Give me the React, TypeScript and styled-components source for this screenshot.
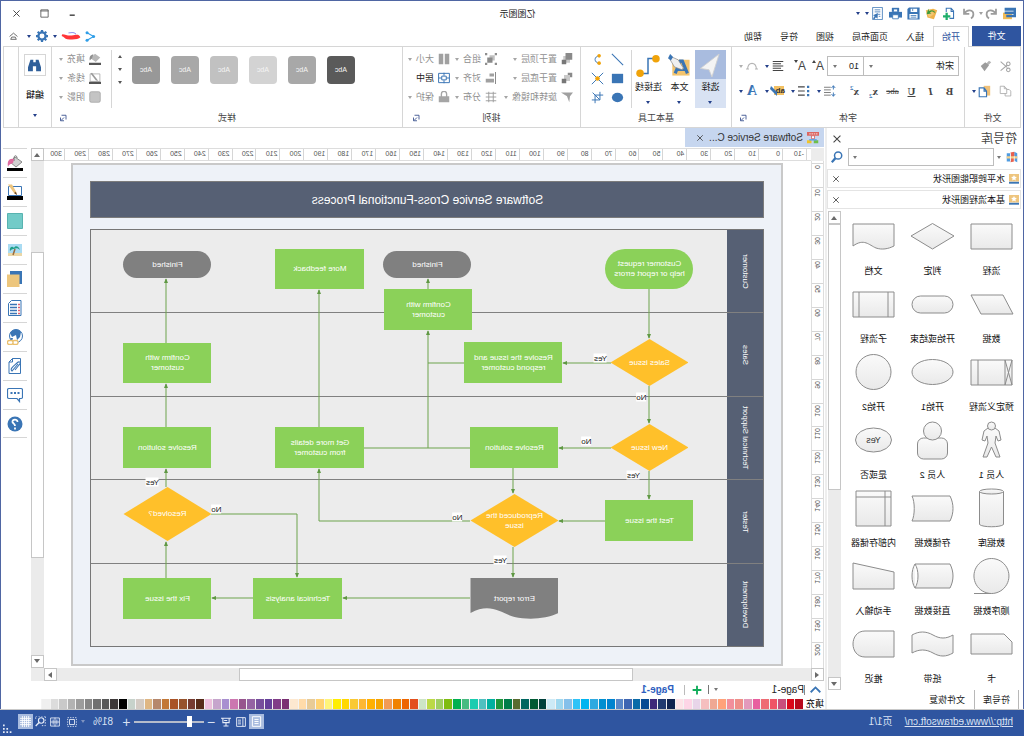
import React from "react";
import styled, { createGlobalStyle, css } from "styled-components";

const blue = "#2f55a0";
const iconBlue = "#3a75b5";
const line = "#d6d6d6";
const ink = "#222222";
const dim = "#8f8f8f";

const Global = createGlobalStyle`
  * { box-sizing: border-box; }
  html, body { margin: 0; padding: 0; background: #ffffff; }
  body { overflow-x: hidden; }
  button, input, select { font: inherit; color: inherit; margin: 0; }
  ul, h1, h2 { margin: 0; padding: 0; font: inherit; list-style: none; }
`;

/* The whole window is flipped left to right. */
const Window = styled.div`
  display: flex;
  flex-direction: column;
  min-height: 100vh;
  transform: scaleX(-1);
  background: #ffffff;
  color: ${ink};
  border: 1px solid #4f66a3;
  border-bottom: 0;
  font-family: "Liberation Sans", "Noto Sans CJK SC", sans-serif;
  font-size: 9px;
  line-height: 12px;
`;

const Row = styled.div<{ $gap?: number; $h?: number; $between?: boolean }>`
  display: flex;
  align-items: center;
  gap: ${(p) => p.$gap ?? 0}px;
  ${(p) => p.$h && css`height: ${p.$h}px;`}
  ${(p) => p.$between && css`justify-content: space-between;`}
`;

const Caret = styled.span<{ $c?: string; $up?: boolean; $big?: boolean }>`
  flex: none;
  width: 0;
  height: 0;
  border: ${(p) => (p.$big ? 3 : 2)}px solid transparent;
  border-bottom-width: ${(p) => (p.$up ? (p.$big ? 4 : 3) : 0)}px;
  border-top-width: ${(p) => (p.$up ? 0 : 3)}px;
  border-top-color: ${(p) => p.$c ?? "#24408a"};
  border-bottom-color: ${(p) => p.$c ?? "#24408a"};
`;

const Tool = styled.button<{ $w?: number; $top?: boolean }>`
  display: inline-flex;
  flex: none;
  align-items: center;
  justify-content: center;
  width: ${(p) => p.$w ?? 18}px;
  height: 18px;
  padding: 0;
  border: 0;
  background: none;
  ${(p) => p.$top && css`${Caret} { align-self: flex-start; margin-top: 3px; }`}
`;

/* ---------- icons ---------- */

const glyphs: Record<string, React.ReactNode> = {
  logo: <><path d="M5 7h11v8H5z" fill="#f2bb55" /><path d="M0 1h14v3.500H3v1h11v3H3v1h9v3H0z" fill={iconBlue} /></>,
  undo: <path d="M2.500 2v6.500H9M3 8C6 2.500 14 3 14 9c0 2-1 4-3 5" fill="none" stroke="#9c9c9c" strokeWidth="2.200" />,
  redo: <path d="M13.500 2v6.500H7M13 8C10 2.500 2 3 2 9c0 2 1 4 3 5" fill="none" stroke="#9c9c9c" strokeWidth="2.200" />,
  add: <><path d="M12 6V1.500H6L3 5v9h5M6 1.500v4H3" fill="none" stroke={iconBlue} strokeWidth="1.300" /><path d="M11.500 7v9M7 11.500h9" stroke="#1fae6b" strokeWidth="2.800" /></>,
  open: <><path d="M1 4l5-2 9 2-2 9-8 2z" fill="#efb24a" /><path d="M11 13l4-9-7-1-3 6z" fill="#f2c675" /><path d="M3 8c1-4 5-5 8-3l1-3 2 7-6-1 2-1C7 4 5 6 3 8z" fill="#3f9a3a" /></>,
  save: <><path d="M.500.500h13l2 2v13H.500z" fill={iconBlue} /><path d="M3.500 2h8v4h-8zM3 8.500h10V14H3z" fill="#fff" /><path d="M4.500 10.500h7M4.500 12.500h7M9 2v3" stroke={iconBlue} /></>,
  print: <><path d="M0 6h16v7H0z" fill={iconBlue} /><path d="M3.500 1h9v5h-9z" fill={iconBlue} /><path d="M5.500 2.500h5V6h-5zM4.500 9.500h7v5h-7z" fill="#fff" stroke={iconBlue} /></>,
  doc: <><path d="M2 .500h12v15H2z" fill="#fff" stroke={iconBlue} /><path d="M4.500 3.500h7M4.500 6h7M4.500 9h3M4.500 11.500h2" stroke={iconBlue} /><path d="M7.500 7.500l6 2.500-2 1 2 3-1.500 1.500-2-3-2 2z" fill={iconBlue} /></>,
  cut: <path d="M14 2L6 9M14 13L6 6.500M4.500 10a2.200 2.200 0 1 0 .1 0M4.500 2.500a2.200 2.200 0 1 0 .1 0" fill="none" stroke="#a5a5a5" strokeWidth="1.300" />,
  brush: <><path d="M1 3l3-2 5 5-3 2z" fill="#b5b5b5" /><path d="M4 7l5-4 6 5-5 7z" fill="#9c9c9c" /></>,
  copy: <path d="M6.500 10.500v-6l3-3h5v9zM9.500 1.500v3h-3M6.500 5.500h-3l-2 2v6h7v-3" fill="#fff" stroke="#a8a8a8" />,
  paste: <><path d="M1 1h8v12H1z" fill="#efc078" /><path d="M5.500 7.500l3-4h6v11h-9zM8.500 3.500v4h-3" fill="#fff" stroke={iconBlue} strokeWidth="1.400" /></>,
  align: <path d="M1 2h14M4 5h11M1 8h14M4 11h11M1 14h14" stroke="#444" strokeWidth="1.400" />,
  arc: <path d="M2 12C3 2 13 2 14 12M0 12h4M12 12h4" fill="none" stroke="#b5b5b5" strokeWidth="1.400" />,
  spacing: <><path d="M7 3h9M7 6.500h9M7 10h9M7 13.500h9" stroke="#555" /><path d="M3.500 1v5M3.500 10v5M1 4l2.500-3L6 4M1 12l2.500 3L6 12" stroke={iconBlue} fill="none" strokeWidth="1.200" /></>,
  bullets: <><path d="M7 2.500h9M7 8h9M7 13.500h9" stroke="#444" strokeWidth="1.400" /><path d="M1 1h3v3H1zM1 6.500h3v3H1zM1 12h3v3H1z" fill={iconBlue} /></>,
  line: <path d="M14 2L2 14" stroke={iconBlue} strokeWidth="1.200" />,
  rect: <path d="M2 3h12v10H2z" fill={iconBlue} />,
  circle: <ellipse cx="8" cy="8" rx="6" ry="5" fill={iconBlue} />,
  curve: <><path d="M5 3c8 1 8 9 0 10" fill="none" stroke={iconBlue} strokeWidth="1.200" /><circle cx="6" cy="3.500" r="2.200" fill="#f0a30a" /><circle cx="6" cy="12.500" r="2.200" fill="#f0a30a" /></>,
  cross: <><path d="M1 1l14 14M15 1L1 15" stroke={iconBlue} strokeWidth="1.200" /><circle cx="8" cy="8" r="2.800" fill="#f0a30a" /></>,
  crop: <path d="M5 1v10h10M1 5h10v10M5 11L14 2" fill="none" stroke={iconBlue} strokeWidth="1.200" />,
  front: <><path d="M5 1h10v10H5z" fill="#c9c9c9" /><path d="M8 0h7v8H8z" fill="#777" transform="translate(-8 0)" /><path d="M1 1h8v8H1z" fill="#777" /><path d="M7 7h8v8H7z" fill="#8a8a8a" stroke="#fff" /></>,
  back: <><path d="M1 1h6v6H1z" fill="#8a8a8a" /><path d="M4 4h8v8H4z" fill="#c9c9c9" /><path d="M9 9h6v6H9z" fill="#777" /></>,
  rotate: <path d="M0 2h16l-8 5-3 8-1-8z" fill="#a0a0a0" />,
  group: <><path d="M3 3h7v7H3z" fill="#c0c0c0" /><path d="M6 6h7v7H6z" fill="#8a8a8a" /><path d="M0 0h3v3H0zM13 0h3v3h-3zM0 13h3v3H0zM13 13h3v3h-3z" fill="#8f8f8f" /></>,
  alignObj: <><path d="M2 0v16" stroke="#888" strokeWidth="1.300" /><path d="M4 2h6v4H4zM4 9h11v5H4z" fill="#a0a0a0" /></>,
  distribute: <path d="M1 3h14M1 8h14M1 13h14M5 1v14M11 1v14" stroke="#9a9a9a" fill="none" strokeWidth="1.200" />,
  size: <path d="M1 1h6v14H1zM9 1h6v14H9z" fill="#a0a0a0" />,
  center: <><path d="M.800 1.800h14.400v12.400H.800z" fill="none" stroke={iconBlue} strokeWidth="1.300" /><path d="M5 5.500h6v5H5zM8 1v4M8 11v4M1 8h4M11 8h4" fill="#fff" stroke={iconBlue} strokeWidth="1.300" /></>,
  lock: <><path d="M1 7h14v8H1z" fill="#a5a5a5" /><path d="M4.500 8V4a3.500 3.500 0 0 1 7 0v4" fill="none" stroke="#a5a5a5" strokeWidth="1.800" /></>,
  fill: <><path d="M1 6l7-5 6 6-7 5z" fill="#b8b8b8" /><path d="M10 2c4 0 6 3 5 8l-3-3z" fill="#8f8f8f" /><path d="M0 13h16v3H0z" fill="#555" /></>,
  stroke: <><path d="M1.500 2.500h13v10h-13z" fill="#fff" stroke="#a5a5a5" /><path d="M12 1L5 10l-1 2 3-1 7-9z" fill="#9a9a9a" /><path d="M0 13h16v3H0z" fill="#555" /></>,
  shadow: <rect x="1" y="1" width="14" height="14" rx="2" fill="#c4c4c4" stroke="#a2a2a2" />,
  launch: <path d="M2 11V2.500H11M6 7l6 6M13 7v6.500H6" fill="none" stroke="#3c5390" strokeWidth="1.800" />,
  share: <><path d="M13 2.500L3.500 8l9.500 5.500" fill="none" stroke="#2f9ee8" strokeWidth="1.600" /><circle cx="3.500" cy="8" r="2.200" fill="#2f9ee8" /><circle cx="13" cy="2.500" r="2.200" fill="#2f9ee8" /><circle cx="13" cy="13.500" r="2.200" fill="#2f9ee8" /></>,
  gear: <><circle cx="8" cy="8" r="4.800" fill="none" stroke={iconBlue} strokeWidth="3" /><path d="M8 0v3M8 13v3M0 8h3M13 8h3M2.300 2.300l2 2M11.700 11.700l2 2M13.700 2.300l-2 2M4.300 11.700l-2 2" stroke={iconBlue} strokeWidth="3" /></>,
  collapse: <path d="M1 8l7-6 7 6M3 13h10l-2-4h-6z" fill="none" stroke="#555" strokeWidth="1.500" />,
  close: <path d="M2.500 2.500l11 11M13.500 2.500l-11 11" stroke="#444" strokeWidth="1.700" />,
  max: <path d="M1.500 1.500h13v13h-13zM1 3.500h14" fill="none" stroke="#555" strokeWidth="1.500" />,
  min: <path d="M4 11h9" stroke="#444" strokeWidth="2.600" />,
  binoculars: <path d="M3 1h3.500v3h3V1H13l3 9v5h-6V9H6v6H0v-5z" fill="#2f5f9a" />,
  search: <><circle cx="6.500" cy="6" r="4.800" fill="none" stroke={iconBlue} strokeWidth="2" transform="matrix(-1 0 0 1 16 0)" /><path d="M6 9.500l-5 5.500" stroke={iconBlue} strokeWidth="3" /></>,
  books: <><path d="M1 3l4-2v12l-4 2z" fill="#4f9be0" /><path d="M5 1l5 1v13l-5-1z" fill="#e8604e" /><path d="M10 3h5v11h-5z" fill="#4f9be0" /><path d="M1 7h14v3H1z" fill="#f5d08a" /><path d="M5 7v8M10 3v11" stroke="#fff" /></>,
  star: <><path d="M0 0h16v12H0z" fill="#eec57e" /><path d="M8 1.500l1.400 3 3.200.3-2.400 2.200.7 3.200L8 8.600 5.100 10.200l.7-3.200L3.400 4.800l3.200-.3z" fill="#fff" /><path d="M0 12.500h16v3H0z" fill={iconBlue} /></>,
  chart: <><path d="M0 0h16v5H0z" fill="#dc6662" /><path d="M2 2.500h12" stroke="#fff" strokeDasharray="2 1" /><path d="M6 5h4v4H6z" fill="#fff" stroke="#d9534f" /><path d="M1 11h6v4H1z" fill="#6fbf4b" /><path d="M10 11h6v4h-6z" fill="#f0c429" /><path d="M8 9v2M3 10.500h10" stroke="#4f9be0" strokeWidth="1.400" /></>,
  sideFill: <><path d="M1 7l7-5 5 5-6 5z" fill="#d0d0d0" stroke="#8a8a8a" /><path d="M6 3c0-3 3-3 3 0v3" fill="none" stroke="#777" /><path d="M9 4c5-1 7 2 6 8-1-3-3-3-5-4z" fill="#df6a9f" /><path d="M0 13h16v3H0z" fill="#000" /></>,
  sideLine: <><path d="M1.500 2.500h13v9h-13z" fill="#fff" stroke={iconBlue} /><path d="M15 .500h-4l-4 7-1 3.500 3-2z" fill="#ecc47d" /><path d="M6 11l1-3 2 1z" fill="#5a3a20" /><path d="M0 12h16v4H0z" fill="#000" /></>,
  teal: <path d="M.5.500h15v15H.5z" fill="#72cbc8" stroke="#58b3b0" />,
  image: <><path d="M1 2h14v12H1z" fill="#a9dbf2" /><path d="M1 11h14v3H1z" fill="#ead7a8" /><path d="M8 7l2 6" stroke="#9a6a3a" strokeWidth="1.500" /><path d="M3 8c1-4 5-5 6-2 2-3 5 0 4 3-2-2-3-2-4-2-2-1-4-1-6 1z" fill="#1fa08a" /></>,
  layers: <><path d="M1 0h12v13H1z" fill={iconBlue} /><path d="M3.500 3.500h12.500v12.500H3.500z" fill="#edc67d" /></>,
  list: <><path d="M14 .500H4.500l-3 3v12H14z" fill="#fff" stroke={iconBlue} transform="matrix(-1 0 0 1 16 0)" /><path d="M6 4.500h7M6 7.500h7M6 10.500h7M6 13.500h7" stroke={iconBlue} strokeWidth="1.500" /><path d="M3 4.500h2M3 7.500h2M3 10.500h2M3 13.500h2" stroke="#e06070" strokeWidth="1.500" /></>,
  globe: <><circle cx="7" cy="7" r="6.500" fill="#fff" stroke={iconBlue} /><path d="M2 3c3-4 9-3 11 1l-2 4-4-2-1 5-3-3zM10 9l3 0-2 3z" fill={iconBlue} /><rect x="5" y="11.500" width="5.500" height="4" rx="1.800" fill="#fff" stroke="#eabf6c" strokeWidth="1.300" /><rect x="10" y="11.500" width="5.500" height="4" rx="1.800" fill="#fff" stroke="#eabf6c" strokeWidth="1.300" /></>,
  attach: <><path d="M2.500 .500h8l3.500 3.500v11.500H2.500zM10.500.500v3.500h3.500" fill="#fff" stroke={iconBlue} /><path d="M12 6l-6 7c-3-2 3-6 5-8s5-1 2 2l-4 5" fill="none" stroke={iconBlue} strokeWidth="1.100" transform="matrix(-1 0 0 1 17 0)" /></>,
  chat: <><path d="M2 1.500h12c1 0 1.500.500 1.500 1.500v7c0 1-.5 1.500-1.500 1.500H6L3.500 14.500V11.500H2C1 11.500 .5 11 .5 10V3C.5 2 1 1.500 2 1.500z" fill="#fff" stroke={iconBlue} strokeWidth="1.200" /><path d="M3.500 6h2M7 6h2M10.500 6h2" stroke={iconBlue} strokeWidth="1.800" /></>,
  help: <><circle cx="8" cy="8" r="7.500" fill={iconBlue} /><path d="M5.500 6C5.500 2.500 11 3 10.500 6c-.3 1.500-2.500 1.500-2.500 4M8 11.500v2" fill="none" stroke="#fff" strokeWidth="1.800" /></>,
  chevron: <path d="M1 12l7-7 7 7" fill="none" stroke={iconBlue} strokeWidth="2.600" />,
  plus: <path d="M8 1v14M1 8h14" stroke="#12ad5b" strokeWidth="3" />,
  page: <path d="M2 1h12v14H2zM5 5h6M5 8h6M5 11h6" fill="none" stroke="#fff" strokeWidth="1.400" />,
  split: <path d="M1 1h14v14H1zM5 1v14M8 5h5M8 8h5M8 11h5" fill="none" stroke="#e6ecf7" strokeWidth="1.500" />,
  present: <path d="M0 2h16M3 2v7h10V2M8 9v5M4 14.500h8M6 5.500h5" fill="none" stroke="#e6ecf7" strokeWidth="1.700" />,
  select: <><path d="M1 1h14v14H1z" fill="none" stroke="#e6ecf7" strokeWidth="1.400" strokeDasharray="2 2" /><path d="M4 4h8v8H4z" fill="none" stroke="#e6ecf7" strokeWidth="1.400" /></>,
  fit: <path d="M1 1.500h14v13H1zM1 8h14M5 4v8M11 4v8M8 1v14" fill="none" stroke="#e6ecf7" strokeWidth="1.400" />,
  zoomArea: <><circle cx="7" cy="6.500" r="4" fill="none" stroke="#e6ecf7" strokeWidth="1.700" /><path d="M10 9.500l5 5" stroke="#e6ecf7" strokeWidth="2" /><path d="M1 0h14v5M1 1v13h6" fill="none" stroke="#e6ecf7" strokeWidth="1.300" strokeDasharray="2 2" /></>,
  grid: <path d="M0 3.500h16M0 6.500h16M0 9.500h16M0 12.500h16M3.500 0v16M6.500 0v16M9.500 0v16M12.500 0v16" stroke="#fff" strokeWidth="1.200" />,
  grip: <path d="M13 1h3v3h-3zM13 7h3v3h-3zM13 13h3v3h-3zM7 7h3v3H7zM7 13h3v3H7zM1 13h3v3H1z" fill="#e6ecf7" />,
  arrow: <path d="M2 0l13 10-6 1-2 5z" fill="#f4f4f4" stroke="#cfcfcf" strokeWidth=".6" />,
  textPen: <><path d="M1 4h12v11H1z" fill="#f3c46e" /><path d="M2.500 13.500l3.500-8.500h1.500l3.500 8.500" fill="none" stroke={iconBlue} strokeWidth="2.200" /><path d="M4 11h6" stroke={iconBlue} strokeWidth="1.600" /><path d="M13.500 2L9 4 5.500 9.500 6 11l5.500-2L14.500 4z" fill="#efefef" stroke="#8a8a8a" strokeWidth=".5" /><path d="M14.500 0L12.500 2l1.500 2.500L16 3z" fill={iconBlue} /></>,
  connector: <><path d="M13 13H8V3H3" fill="none" stroke={iconBlue} transform="matrix(-1 0 0 1 16 0)" /><circle cx="2.700" cy="3.200" r="0" /><circle cx="2.700" cy="12.800" r="0" /></>,
  scribble: <><path d="M8 3c4-4 8-2 12-2" fill="none" stroke="#3a3ae0" /><path d="M1 8c3-6 6-4 14-3 6 1 10-2 15-2l1 3c-4 1-5 5-9 5-7 1-18 1-21-3z" fill="#ff3538" /></>,
};

/* Elbow line between two anchor dots, falling from left to right. */
glyphs.connector = (
  <>
    <path d="M13 13H8V3H3" fill="none" stroke={iconBlue} />
    <circle cx="13.300" cy="12.800" r="2.500" fill="#f0a30a" />
    <circle cx="2.700" cy="3.200" r="2.500" fill="#f0a30a" />
  </>
);
glyphs.search = (
  <>
    <circle cx="6.500" cy="6" r="4.800" fill="none" stroke={iconBlue} strokeWidth="2" />
    <path d="M10 9.500l5 5.500" stroke={iconBlue} strokeWidth="3" />
  </>
);
glyphs.front = (
  <>
    <path d="M4 4h9v9H4z" fill="#c9c9c9" />
    <path d="M1 0h9v9H1z" fill="#8a8a8a" />
    <path d="M9 9h6v6H9z" fill="#777" />
  </>
);

const Icon = ({ n, s = 12, w }: { n: string; s?: number; w?: number }) => (
  <svg width={w ?? s} height={s} viewBox={n === "scribble" ? "0 0 32 12" : "0 0 16 16"} aria-hidden="true">
    {glyphs[n]}
  </svg>
);

/* ---------- title bar ---------- */

const TitleBar = styled.header`
  display: grid;
  grid-template-columns: 1fr auto 1fr;
  align-items: center;
  height: 25px;
  padding: 0 7px 0 4px;
`;
const AppName = styled.span`
  margin-right: 8px;
`;
const QuickBar = styled.div`
  display: flex;
  align-items: center;
`;
const WindowButtons = styled.div`
  display: flex;
  justify-content: flex-end;
  gap: 10px;
`;

/* ---------- tabs ---------- */

const TabBar = styled.nav`
  display: flex;
  align-items: stretch;
  height: 20px;
  padding: 0 2px;
`;
const FileTab = styled.button`
  width: 49px;
  margin-right: 3px;
  border: 0;
  background: ${blue};
  color: #ffffff;
`;
const MenuTab = styled.button<{ $on?: boolean }>`
  padding: 0 8px;
  border: 1px solid ${(p) => (p.$on ? line : "transparent")};
  border-bottom: 0;
  background: ${(p) => (p.$on ? "#ffffff" : "none")};
  color: ${(p) => (p.$on ? blue : ink)};
  ${(p) => p.$on && css`margin-bottom: -1px; z-index: 1;`}
`;
const TabTools = styled.div`
  display: flex;
  align-items: center;
  gap: 4px;
  margin-left: auto;
  padding-right: 2px;
`;

/* ---------- ribbon ---------- */

const Ribbon = styled.div`
  display: flex;
  flex: none;
  height: 82px;
  margin: 0 2px;
  border: 1px solid ${line};
`;
const Group = styled.section<{ $w?: number; $pad?: number }>`
  display: flex;
  flex-direction: column;
  flex: ${(p) => (p.$w ? "none" : "1")};
  ${(p) => p.$w && css`width: ${p.$w}px;`}
  padding: 0 ${(p) => p.$pad ?? 5}px;
  border-right: 1px solid ${line};
`;
const GroupBody = styled.div`
  display: flex;
  flex-direction: column;
  height: 64px;
  padding-top: 8px;
  gap: 3px;
`;
const Columns = styled.div`
  display: flex;
  height: 64px;
  padding-top: 3px;
`;
const Stack = styled.div<{ $w?: number; $indent?: number }>`
  display: flex;
  flex-direction: column;
  gap: 1px;
  padding-left: ${(p) => p.$indent ?? 0}px;
  ${(p) => p.$w && css`width: ${p.$w}px;`}
`;
const GroupTitle = styled.div`
  display: grid;
  grid-template-columns: 10px 1fr 10px;
  align-items: center;
  height: 14px;
  text-align: center;
  color: #444444;
`;
const Picker = styled.label<{ $w: number }>`
  display: flex;
  align-items: center;
  width: ${(p) => p.$w}px;
  height: 20px;
  padding-right: 5px;
  border: 1px solid #bdbdbd;
  & + & { border-left: 0; }
  select {
    flex: 1;
    min-width: 0;
    height: 16px;
    padding: 0 4px;
    border: 0;
    background: none;
    appearance: none;
  }
`;
const Letter = styled.span<{ $b?: boolean; $i?: boolean; $u?: boolean; $s?: boolean; $c?: string; $size?: number; $sans?: boolean }>`
  font-family: ${(p) => (p.$sans ? '"Liberation Sans", sans-serif' : '"Liberation Serif", serif')};
  font-size: ${(p) => p.$size ?? 12}px;
  color: ${(p) => p.$c ?? "#444444"};
  font-weight: ${(p) => (p.$b ? 700 : 400)};
  font-style: ${(p) => (p.$i ? "italic" : "normal")};
  text-decoration: ${(p) => (p.$u ? "underline" : p.$s ? "line-through" : "none")};
  sub, sup { font-size: 7px; line-height: 0; color: ${iconBlue}; }
`;
const BigTool = styled.button<{ $on?: boolean }>`
  display: flex;
  flex-direction: column;
  align-items: center;
  width: 31px;
  height: 58px;
  padding: 0 0 4px;
  border: 0;
  white-space: nowrap;
  background: ${(p) => (p.$on ? "linear-gradient(#a9bcdf 29px, #d8e2f3 29px)" : "none")};
`;
const BigIcon = styled.span`
  display: flex;
  flex: none;
  align-items: center;
  justify-content: center;
  height: 31px;
`;
const BigCaret = styled.span`
  display: flex;
  align-items: flex-end;
  flex: 1;
`;
const Rule = styled.span`
  width: 1px;
  height: 58px;
  margin: 0 1px;
  background: ${line};
`;
const LabelTool = styled.button<{ $w: number; $on?: boolean }>`
  display: flex;
  align-items: center;
  gap: 4px;
  width: ${(p) => p.$w}px;
  height: 18px;
  padding: 0;
  border: 0;
  background: none;
  white-space: nowrap;
  color: ${(p) => (p.$on ? ink : dim)};
`;
const Swatches = styled.div`
  display: flex;
  flex: 1;
  justify-content: flex-end;
  gap: 11px;
  padding: 6px 8px 0 0;
`;
const StyleSwatch = styled.button<{ $c: string }>`
  width: 28px;
  height: 28px;
  padding: 0;
  border: 0;
  border-radius: 4px;
  background: ${(p) => p.$c};
  color: #f4f4f4;
  font-size: 7px;
`;
const Spinner = styled.div`
  display: flex;
  flex-direction: column;
  align-items: center;
  gap: 10px;
  width: 8px;
  margin-right: 3px;
  padding-top: 5px;
`;
const FindBox = styled.button`
  display: flex;
  align-items: center;
  justify-content: center;
  width: 22px;
  height: 22px;
  padding: 0;
  border: 1px solid ${line};
  background: #ffffff;
`;
const EditGroup = styled.section`
  display: flex;
  flex-direction: column;
  align-items: center;
  gap: 13px;
  width: 33px;
  padding-top: 7px;
  border-right: 1px solid ${line};
  color: #000000;
`;
const RibbonEnd = styled.div`
  width: 14px;
`;

const Split = ({ label, c, children }: { label: string; c?: string; children: React.ReactNode }) => (
  <Tool $w={26} aria-label={label}>
    <Tool as="span">{children}</Tool>
    <Caret $c={c} />
  </Tool>
);

const Labelled = ({ n, text, w, plain }: { n: string; text: string; w: number; plain?: boolean }) => (
  <LabelTool $w={w} $on={plain}>
    <Icon n={n} s={12} />
    <span>{text}</span>
    {!plain && <Caret $c="#a5a5a5" />}
  </LabelTool>
);

const HighlightIcon = () => (
  <svg width="16" height="12" viewBox="0 0 16 12" aria-hidden="true">
    <path d="M2 1h10v9H2z" fill="#f2c063" />
    <text x="1" y="8" fontSize="8" fontWeight="700" fill="#333">ab</text>
    <path d="M15 1l1 3-5 5-2 2 0-4z" fill={iconBlue} />
  </svg>
);

const Title = ({ text, launch }: { text: string; launch?: boolean }) => (
  <GroupTitle>
    <span />
    <span>{text}</span>
    {launch && <Icon n="launch" s={8} />}
  </GroupTitle>
);

/* ---------- library panel ---------- */

const Main = styled.main`
  display: flex;
  flex: 1;
`;
const Library = styled.aside`
  display: flex;
  flex-direction: column;
  flex: none;
  width: 198px;
  padding-left: 2px;
  border-right: 2px solid #eeeeee;
`;
const PanelHead = styled.div`
  display: flex;
  align-items: center;
  justify-content: space-between;
  height: 20px;
  padding: 2px 4px 0 4px;
  font-size: 12px;
  color: #444444;
`;
const SearchRow = styled.div`
  display: flex;
  align-items: center;
  gap: 3px;
  height: 18px;
  margin-bottom: 1px;
  padding: 0 4px 0 0;
`;
const SearchBox = styled.label`
  display: flex;
  align-items: center;
  flex: 1;
  height: 18px;
  margin-right: 1px;
  padding-right: 4px;
  border: 1px solid #bdbdbd;
  input {
    flex: 1;
    min-width: 0;
    height: 14px;
    border: 0;
    outline: 0;
    background: none;
  }
`;
const LibraryHead = styled.div`
  display: flex;
  align-items: center;
  gap: 4px;
  height: 19px;
  margin-top: 2px;
  padding: 0 2px 0 1px;
  border: 1px solid #e4e4e4;
  color: #111111;
  button { margin-left: auto; }
`;
const LibraryBody = styled.div`
  display: flex;
  flex: 1;
  margin-top: 2px;
  padding-right: 1px;
`;
const ShapeGrid = styled.ul`
  display: grid;
  grid-template-columns: repeat(3, 59px);
  grid-auto-rows: 68px;
  flex: 1;
`;
const ShapeTile = styled.button`
  display: flex;
  flex-direction: column;
  align-items: center;
  width: 100%;
  height: 68px;
  padding: 0;
  border: 0;
  background: none;
  white-space: nowrap;
  color: #111111;
  line-height: 16px;
  svg { flex: none; margin: 5px 0 7px; }
`;
const PanelTabs = styled.div`
  display: flex;
  height: 19px;
  padding-left: 2px;
`;
const PanelTab = styled.button<{ $on?: boolean }>`
  padding: 0 8px;
  border: 1px solid ${(p) => (p.$on ? "#b8b8b8" : "transparent")};
  border-width: 0 1px;
  background: none;
`;

/* ---------- scroll bars ---------- */

const Bar = styled.div<{ $vertical?: boolean }>`
  display: flex;
  flex: none;
  flex-direction: ${(p) => (p.$vertical ? "column" : "row")};
  ${(p) => (p.$vertical ? css`width: 13px;` : css`height: 13px;`)}
  background: #ebebeb;
`;
const BarButton = styled.button`
  display: flex;
  flex: none;
  align-items: center;
  justify-content: center;
  width: 13px;
  height: 13px;
  padding: 0;
  border: 1px solid #c6c6c6;
  background: #ffffff;
`;
const BarThumb = styled.div<{ $grow: number }>`
  flex: ${(p) => p.$grow} 0 0;
  border: 1px solid #c6c6c6;
  background: #ffffff;
`;
const BarSpace = styled.div<{ $grow: number }>`
  flex: ${(p) => p.$grow} 0 0;
`;
const Turn = styled.span<{ $deg: number }>`
  display: flex;
  transform: rotate(${(p) => p.$deg}deg);
`;

const Scroll = ({ vertical, parts, label }: { vertical?: boolean; parts: [number, number, number]; label: string }) => (
  <Bar $vertical={vertical} role="group" aria-label={label}>
    <BarButton aria-label="Back"><Turn $deg={vertical ? 0 : -90}><Caret $up $big $c="#6a6a6a" /></Turn></BarButton>
    {parts[0] > 0 && <BarSpace $grow={parts[0]} />}
    <BarThumb $grow={parts[1]} />
    <BarSpace $grow={parts[2]} />
    <BarButton aria-label="Forward"><Turn $deg={vertical ? 180 : 90}><Caret $up $big $c="#6a6a6a" /></Turn></BarButton>
  </Bar>
);

/* ---------- editor ---------- */

const Editor = styled.div`
  display: flex;
  flex-direction: column;
  flex: 1;
  min-width: 0;
  padding-left: 1px;
`;
const DocTabs = styled.div`
  height: 20px;
`;
const DocTab = styled.div`
  display: flex;
  align-items: center;
  gap: 4px;
  width: 139px;
  height: 19px;
  padding: 0 11px 0 5px;
  background: #c6d6ef;
  font-size: 10px;
  white-space: nowrap;
  color: #333333;
  button { margin-left: auto; }
`;
const Surface = styled.div`
  display: grid;
  grid-template-columns: 13px minmax(0, 1fr) 13px;
  grid-template-rows: 13px minmax(506px, 1fr) 13px;
  grid-template-areas:
    "corner top side"
    "left canvas side"
    "bottom bottom end";
  flex: 1;
`;
const Corner = styled.div<{ $area: string }>`
  grid-area: ${(p) => p.$area};
  background: #ececec;
`;
const RulerH = styled.div`
  display: grid;
  grid-area: top;
  grid-template-columns: repeat(31, 1fr) 21px;
  padding-left: 4px;
  border: 1px solid #dddddd;
  border-width: 1px 0;
  font-size: 7px;
  line-height: 10px;
  color: #555555;
  span { padding-left: 2px; border-left: 1px solid ${line}; }
`;
const RulerV = styled.div`
  display: grid;
  grid-area: left;
  grid-template-rows: repeat(20, 1fr) 26px;
  padding-top: 2px;
  border: 1px solid #dddddd;
  border-width: 0 1px;
  font-size: 7px;
  color: #555555;
  span { display: flex; align-items: flex-start; justify-content: center; padding-top: 1px; border-top: 1px solid ${line}; }
`;
const Upward = styled.b`
  font-weight: 400;
  line-height: 10px;
  writing-mode: vertical-rl;
  transform: rotate(180deg);
`;
const CanvasArea = styled.div`
  display: flex;
  grid-area: canvas;
  justify-content: center;
  min-width: 0;
  padding-top: 2px;
  overflow: hidden;
`;
const Sheet = styled.div`
  flex: none;
  width: 712px;
  height: 503px;
  padding: 16px 17px;
  border: 2px solid #c9c9c9;
  background: #eef2f8;
`;
const Banner = styled.h1`
  display: flex;
  align-items: center;
  justify-content: center;
  height: 37px;
  margin-bottom: 11px;
  border: 1px solid #7c7c7c;
  background: #566074;
  color: #ffffff;
  font-size: 12px;
`;
const Diagram = styled.div`
  position: relative;
  display: flex;
  flex-direction: column;
  width: 674px;
  height: 418px;
  border: 1px solid #777777;
  background: #ececec;
`;
const Lane = styled.div`
  display: flex;
  flex: 1;
  & + & { border-top: 1px solid #808080; }
`;
const LaneName = styled.h2`
  display: flex;
  align-items: center;
  justify-content: center;
  width: 36px;
  background: #566074;
  color: #ffffff;
  font-size: 8px;
`;
const Connectors = styled.svg`
  position: absolute;
  left: -1px;
  top: -1px;
`;
const Node = styled.div<{ $x: number; $y: number; $w: number; $h: number; $fill: string; $round?: boolean; $clip?: string }>`
  position: absolute;
  left: ${(p) => p.$x - 1}px;
  top: ${(p) => p.$y - 1}px;
  width: ${(p) => p.$w}px;
  height: ${(p) => p.$h}px;
  display: flex;
  align-items: center;
  justify-content: center;
  text-align: center;
  white-space: pre;
  font-size: 8px;
  line-height: 10px;
  color: #ffffff;
  background: ${(p) => p.$fill};
  border-radius: ${(p) => (p.$round ? "20px" : "0")};
  ${(p) => p.$clip && css`clip-path: ${p.$clip};`}
`;
const Tag = styled.span<{ $x: number; $y: number }>`
  position: absolute;
  left: ${(p) => p.$x}px;
  top: ${(p) => p.$y}px;
  transform: translate(-50%, -50%);
  background: #ffffff;
  color: #222222;
  font-size: 8px;
  line-height: 9px;
`;
const SideScroll = styled.div`
  display: flex;
  grid-area: side;
`;
const BottomScroll = styled.div`
  grid-area: bottom;
`;
const PageBar = styled.div`
  display: flex;
  align-items: center;
  height: 17px;
  padding-left: 2px;
  font-size: 10px;
`;
const PagePick = styled.button`
  display: flex;
  align-items: center;
  justify-content: space-between;
  width: 91px;
  margin: 0 5px 0 5px;
  padding: 0;
  border: 0;
  border-left: 1px solid #888888;
  background: none;
  line-height: 10px;
`;
const PageRule = styled.span`
  width: 1px;
  height: 9px;
  margin-right: 3px;
  background: #777777;
`;
const PageTab = styled.button`
  margin-left: 4px;
  padding: 0 10px;
  border: 0;
  border-left: 1px solid #bbbbbb;
  background: none;
  color: #2f5fc0;
  font-weight: 700;
  line-height: 10px;
`;
const Palette = styled.div`
  display: flex;
  align-items: center;
  height: 11px;
  line-height: 10px;
  color: #000000;
`;
const Colors = styled.div`
  display: grid;
  grid-template-columns: repeat(89, minmax(0, 1fr));
  flex: 1;
  margin: 0 10px 0 3px;
`;
const Color = styled.button<{ $c: string }>`
  height: 10px;
  padding: 0;
  border: 0;
  border-right: 1px solid #f3f3f3;
  background: ${(p) => p.$c};
`;
const SideBar = styled.aside`
  display: flex;
  flex-direction: column;
  flex: none;
  width: 24px;
  margin: 20px 2px 0 4px;
`;
const SideButton = styled.button`
  display: flex;
  align-items: center;
  justify-content: center;
  height: 29px;
  padding: 0;
  border: 0;
  border-top: 1px solid ${line};
  background: none;
  &:last-child { border-bottom: 1px solid ${line}; }
`;

/* ---------- status bar ---------- */

const StatusBar = styled.footer`
  display: flex;
  align-items: center;
  height: 27px;
  padding: 0 3px 3px 11px;
  margin: 0 -1px;
  border-top: 1px solid #c9c9c9;
  background: ${blue};
  color: #d9e2f3;
  font-size: 10px;
  a { color: inherit; margin-right: 12px; }
`;
const StatusTools = styled.div`
  display: flex;
  align-items: center;
  margin-left: auto;
  height: 16px;
`;
const StatusButton = styled.button<{ $on?: boolean; $w?: number }>`
  display: flex;
  flex: none;
  align-items: center;
  justify-content: center;
  width: ${(p) => p.$w ?? 15}px;
  height: 15px;
  padding: 0;
  border: 0;
  background: ${(p) => (p.$on ? "#a9bcdf" : "none")};
  font-size: 14px;
`;
const ZoomRange = styled.input`
  width: 70px;
  height: 12px;
  background: none;
  appearance: none;
  &::-webkit-slider-runnable-track { height: 2px; background: #b5bccb; }
  &::-webkit-slider-thumb {
    appearance: none;
    width: 5px;
    height: 11px;
    margin-top: -5px;
    background: #ffffff;
  }
`;
const Percent = styled.output`
  width: 28px;
  margin-left: 6px;
`;
const Grip = styled.span`
  display: flex;
  align-self: flex-end;
  margin-left: 6px;
`;

/* ---------- data ---------- */

const shapes: [string, React.ReactNode][] = [
  ["流程", <path d="M2 8h41v25H2z" />],
  ["判定", <path d="M1 20L22.500 7.500 44 20 22.500 33z" />],
  ["文档", <path d="M2 8h41v22C32 22 27 29 20 32 14 34 8 33 2 30z" />],
  ["数据", <path d="M11 11h32L33 30H1z" />],
  ["开始或结束", <rect x="2" y="12" width="41" height="17" rx="8.500" />],
  ["子流程", <path d="M2 8h41v25H2zM8 8v25M37 8v25" />],
  ["预定义流程", <path d="M2 8h41v25H2zM9 8v25M36 8v25M2 8l7 25M9 8L2 33" />],
  ["开始1", <ellipse cx="22.500" cy="20" rx="20.500" ry="12.500" />],
  ["开始2", <circle cx="22.500" cy="20" r="17.500" />],
  ["人员 1", <><path d="M19 8l-4 3-2 9 3 1 2-5 1 7-5 14h4l4.500-10L27 37h4l-5-14 1-7 2 5 3-1-2-9-4-3z" /><circle cx="22.500" cy="6" r="4" /></>],
  ["人员 2", <><rect x="7.500" y="18" width="30" height="21" rx="6" /><circle cx="22.500" cy="11" r="9" /></>],
  ["是或否", <><ellipse cx="22.500" cy="20" rx="18" ry="12" /><text x="22.500" y="23" textAnchor="middle" fontSize="9" fill="#333" stroke="none">Yes</text></>],
  ["数据库", <><path d="M10.500 3.500v33c3 3 21 3 24 0v-33" /><ellipse cx="22.500" cy="3.500" rx="12" ry="2.500" /></>],
  ["存储数据", <path d="M5 8h38c-3 6-3 19 0 25H5C1 25 1 16 5 8z" />],
  ["内部存储器", <path d="M5 3h35v35H5zM5 9h35M11 3v35" />],
  ["顺序数据", <path d="M22.500 37.500a17.500 17.500 0 1 1 .1 0H40" />],
  ["直接数据", <path d="M5 8h35c4 6 4 18 0 24H5C1 24 1 16 5 8zM40 8c-4 6-4 18 0 24" />],
  ["手动输入", <path d="M2 16l41-9v26H2z" />],
  ["卡", <path d="M10 10h33v20H2V18z" />],
  ["纸带", <path d="M2 11c7 4 13 4 20 0s14-4 21 0v18c-7-4-14-4-21 0s-13 4-20 0z" />],
  ["推迟", <path d="M2 7h29c16 0 16 26 0 26H2z" />],
];

const green = "#8bd159";
const amber = "#ffc02a";
const gray = "#808080";
const rhomb = "polygon(50% 0, 100% 50%, 50% 100%, 0 50%)";
const wave = 'path("M0 0H88V35C68 24 58 35 44 39C30 42 12 41 0 35Z")';

const nodes: { x: number; y: number; w: number; h: number; f: string; t: string; round?: boolean; clip?: string }[] = [
  { x: 71, y: 20, w: 88, h: 40, f: green, t: "Customer request\nhelp or report errors", round: true },
  { x: 76, y: 110, w: 78, h: 47, f: amber, t: "Sales issue", clip: rhomb },
  { x: 76, y: 195, w: 78, h: 47, f: amber, t: "New issue", clip: rhomb },
  { x: 71, y: 271, w: 88, h: 41, f: green, t: "Test the issue" },
  { x: 202, y: 113, w: 98, h: 41, f: green, t: "Resolve the issue and\nrespond customer" },
  { x: 206, y: 198, w: 88, h: 41, f: green, t: "Resolve solution" },
  { x: 206, y: 265, w: 88, h: 53, f: amber, t: "Reproduced the\nissue", clip: rhomb },
  { x: 206, y: 349, w: 88, h: 41, f: gray, t: "Error report", clip: wave },
  { x: 293, y: 22, w: 88, h: 27, f: gray, t: "Finished", round: true },
  { x: 292, y: 60, w: 88, h: 41, f: green, t: "Confirm with\ncustomer" },
  { x: 400, y: 20, w: 89, h: 40, f: green, t: "More feedback" },
  { x: 400, y: 198, w: 89, h: 41, f: green, t: "Get more details\nfrom customer" },
  { x: 422, y: 349, w: 89, h: 41, f: green, t: "Technical analysis" },
  { x: 553, y: 22, w: 88, h: 27, f: gray, t: "Finished", round: true },
  { x: 553, y: 114, w: 88, h: 40, f: green, t: "Confirm with\ncustomer" },
  { x: 553, y: 198, w: 88, h: 41, f: green, t: "Resolve solution" },
  { x: 553, y: 258, w: 88, h: 54, f: amber, t: "Resolved?", clip: rhomb },
  { x: 553, y: 349, w: 88, h: 41, f: green, t: "Fix the issue" },
];

const arrows = [
  "M115 60V109", "M115 157V194", "M115 242V270", "M153 134H201", "M153 219H205", "M159 292H205",
  "M251 239V264", "M251 318V348", "M336 219V102", "M336 60V50", "M445 198V61", "M294 292H445V240",
  "M294 369H421", "M511 369H552", "M598 349V313", "M598 258V240", "M598 198V155", "M598 114V50",
  "M553 285H467V348",
];
const plainLines = ["M294 219H400", "M300 134H336"];

const tags: [string, number, number][] = [
  ["Yes", 163, 128], ["No", 122, 167], ["No", 177, 211], ["Yes", 130, 245],
  ["No", 306, 287], ["Yes", 263, 330], ["Yes", 611, 252], ["No", 547, 279],
];

const colors = (
  "b80a1c d9091a c94f7c ef5466 ee6b73 e85f9f e39abb ef8f88 f28f9b ffa27a efa893 f5bfbf e8d5e9 fdd5e6 fde3e8 " +
  "0f2450 203a70 3e2a7a 064a93 0a6ba8 3f66b2 5a87c8 0083cf 008fd1 2fa9e0 00b4f0 2fc3f7 85c0ea 9fd8ef cdeaf6 " +
  "00403a 005a33 006660 596b30 007d4a 1e963c 00b0a0 50c0c0 1accb0 48bb80 00b050 80bc10 a0cf62 bcd947 cde5c6 " +
  "e34f1e ed6500 f08200 f29b55 f5a500 ffb000 fdb733 f9c933 ffd800 ffee00 fff47a ffd372 e8cb96 ffdba9 fde8d0 " +
  "7a2f73 813c88 65409a 774f9c 9563a3 97558e cc77b0 a88fd0 c6a5cc edc0dc " +
  "572b18 763b30 96522c a95326 c27838 b5876c dfb683 d4cbc4 c7d2cb 000000 3d3838 595959 707070 868686 9c9c9c b3b3b3 c9c9c9 dcdcdc efefef"
).split(" ");

const sideTools: [string, string][] = [
  ["sideFill", "Fill"], ["sideLine", "Line"], ["teal", "Background"], ["image", "Image"], ["layers", "Layers"],
  ["list", "Notes"], ["globe", "Link"], ["attach", "Attachment"], ["chat", "Comment"], ["help", "Help"],
];

/* ---------- sections ---------- */

const TopBar = () => (
  <TitleBar>
    <QuickBar>
      <Tool aria-label="App menu"><Icon n="logo" s={13} /></Tool>
      <Tool aria-label="Undo"><Icon n="undo" s={13} /></Tool>
      <Caret $c="#a0a0a0" />
      <Tool $w={20} aria-label="Redo"><Icon n="redo" s={13} /></Tool>
      {["add", "open", "save", "print", "doc"].map((n) => (
        <Tool key={n} aria-label={n}><Icon n={n} s={13} /></Tool>
      ))}
      <Row $gap={5}><Caret /><Caret /></Row>
    </QuickBar>
    <AppName>亿图图示</AppName>
    <WindowButtons>
      <Tool aria-label="Minimize"><Icon n="min" s={9} /></Tool>
      <Tool aria-label="Maximize"><Icon n="max" s={9} /></Tool>
      <Tool aria-label="Close"><Icon n="close" s={9} /></Tool>
    </WindowButtons>
  </TitleBar>
);

const Menu = () => (
  <TabBar>
    <FileTab>文件</FileTab>
    <MenuTab $on>开始</MenuTab>
    {["插入", "页面布局", "视图", "符号", "帮助"].map((t) => (
      <MenuTab key={t}>{t}</MenuTab>
    ))}
    <TabTools>
      <Tool $w={12} aria-label="Share"><Icon n="share" s={11} /></Tool>
      <Icon n="scribble" s={8} w={20} />
      <Caret />
      <Tool $w={14} aria-label="Settings"><Icon n="gear" s={12} /></Tool>
      <Caret />
      <Tool aria-label="Collapse ribbon"><Icon n="collapse" s={9} /></Tool>
    </TabTools>
  </TabBar>
);

const RibbonBar = () => (
  <Ribbon>
    <Group $w={56} $pad={4}>
      <GroupBody>
        <Row $h={22}><Tool $w={20} aria-label="Cut"><Icon n="cut" s={13} /></Tool><Tool $w={20} aria-label="Format painter"><Icon n="brush" s={12} /></Tool></Row>
        <Row $h={22}><Tool $w={20} aria-label="Copy"><Icon n="copy" s={13} /></Tool><Split label="Paste"><Icon n="paste" s={13} /></Split></Row>
      </GroupBody>
      <Title text="文件" />
    </Group>
    <Group $w={233}>
      <GroupBody>
        <Row $h={22} $between>
          <Row>
            <Picker $w={96}><select aria-label="Font"><option>宋体</option></select><Caret $c="#777777" /></Picker>
            <Picker $w={36}><select aria-label="Font size"><option>10</option></select><Caret $c="#777777" /></Picker>
            <Tool $top aria-label="Grow font"><Letter $sans $size={12}>A</Letter><Caret $up $c="#444444" /></Tool>
            <Tool $top aria-label="Shrink font"><Letter $sans $size={12}>A</Letter><Caret $c="#444444" /></Tool>
          </Row>
          <Row>
            <Split label="Align"><Icon n="align" s={12} /></Split>
            <Split label="Curve" c="#b0b0b0"><Icon n="arc" s={12} /></Split>
          </Row>
        </Row>
        <Row $h={22} $between>
          <Row>
            <Tool $w={19}><Letter $b $size={11}>B</Letter></Tool>
            <Tool $w={19}><Letter $i $b $size={11}>I</Letter></Tool>
            <Tool $w={19}><Letter $u $b $size={11}>U</Letter></Tool>
            <Tool $w={19}><Letter $s $size={9}>abc</Letter></Tool>
            <Tool $w={19}><Letter $b $size={11}>x<sub>2</sub></Letter></Tool>
            <Tool $w={19}><Letter $b $size={11}>x<sup>2</sup></Letter></Tool>
          </Row>
          <Row>
            <Split label="Line spacing"><Icon n="spacing" s={12} /></Split>
            <Split label="Bullets"><Icon n="bullets" s={12} /></Split>
            <Split label="Highlight"><HighlightIcon /></Split>
            <Split label="Font color"><Letter $b $c={iconBlue} $size={14}>A</Letter></Split>
          </Row>
        </Row>
      </GroupBody>
      <Title text="字体" launch />
    </Group>
    <Group $w={151}>
      <Columns>
        <BigTool $on><BigIcon><Icon n="arrow" s={23} /></BigIcon>选择<BigCaret><Caret /></BigCaret></BigTool>
        <BigTool><BigIcon><Icon n="textPen" s={23} /></BigIcon>文本<BigCaret><Caret /></BigCaret></BigTool>
        <BigTool><BigIcon><Icon n="connector" s={24} /></BigIcon>连接线<BigCaret><Caret /></BigCaret></BigTool>
        <Rule />
        <Stack $w={24}>{["line", "rect", "circle"].map((n) => <Tool key={n} $w={24} aria-label={n}><Icon n={n} s={15} /></Tool>)}</Stack>
        <Stack>{["curve", "cross", "crop"].map((n) => <Tool key={n} $w={16} aria-label={n}><Icon n={n} s={13} /></Tool>)}</Stack>
      </Columns>
      <Title text="基本工具" />
    </Group>
    <Group $w={178} $pad={7}>
      <Columns>
        <Stack $w={76}>
          <Labelled n="front" text="置于顶层" w={76} />
          <Labelled n="back" text="置于底层" w={76} />
          <Labelled n="rotate" text="旋转和镜像" w={76} />
        </Stack>
        <Stack $w={47}>
          <Labelled n="group" text="组合" w={47} />
          <Labelled n="alignObj" text="对齐" w={47} />
          <Labelled n="distribute" text="分布" w={47} />
        </Stack>
        <Stack>
          <Labelled n="size" text="大小" w={42} />
          <Labelled n="center" text="居中" w={42} plain />
          <Labelled n="lock" text="保护" w={42} />
        </Stack>
      </Columns>
      <Title text="排列" launch />
    </Group>
    <Group>
      <Columns>
        <Swatches>
          {["#5a5a5a", "#a8a8a8", "#d3d3d3", "#c1c1c1", "#a8a8a8", "#989898"].map((c, i) => (
            <StyleSwatch key={i} $c={c}>Abc</StyleSwatch>
          ))}
        </Swatches>
        <Spinner><Caret $up $c="#555555" /><Caret $c="#555555" /><Caret $c="#555555" /></Spinner>
        <Rule />
        <Stack $w={53} $indent={9}>
          <Labelled n="fill" text="填充" w={44} />
          <Labelled n="stroke" text="线条" w={44} />
          <Labelled n="shadow" text="阴影" w={44} />
        </Stack>
      </Columns>
      <Title text="样式" launch />
    </Group>
    <EditGroup>
      <FindBox aria-label="Find"><Icon n="binoculars" s={13} /></FindBox>
      <span>编辑</span>
      <Caret />
    </EditGroup>
    <RibbonEnd />
  </Ribbon>
);

const LibraryPanel = () => (
  <Library>
    <PanelHead>
      符号库
      <Tool $w={12} aria-label="Close panel"><Icon n="close" s={10} /></Tool>
    </PanelHead>
    <SearchRow>
      <Tool $w={17} aria-label="Libraries"><Icon n="books" s={12} /></Tool>
      <Caret $c="#777777" />
      <SearchBox><input aria-label="Search shapes" /><Caret $c="#777777" /></SearchBox>
      <Tool $w={13} aria-label="Search"><Icon n="search" s={12} /></Tool>
    </SearchRow>
    {["水平跨职能图形状", "基本流程图形状"].map((t) => (
      <LibraryHead key={t}>
        <Icon n="star" s={10} />
        {t}
        <Tool $w={12} aria-label={"Close " + t}><Icon n="close" s={8} /></Tool>
      </LibraryHead>
    ))}
    <LibraryBody>
      <ShapeGrid>
        {shapes.map(([name, art]) => (
          <li key={name}>
            <ShapeTile>
              <svg width="45" height="40" viewBox="0 0 45 40" fill="url(#shade)" stroke="#8c8c8c" aria-hidden="true">
                <defs><linearGradient id="shade" x1="0" y1="0" x2="0" y2="1"><stop offset="0" stopColor="#fafafa" /><stop offset="1" stopColor="#e9e9e9" /></linearGradient></defs>
                {art}
              </svg>
              {name}
            </ShapeTile>
          </li>
        ))}
      </ShapeGrid>
      <Scroll vertical parts={[0, 265, 187]} label="Library scroll" />
    </LibraryBody>
    <PanelTabs>
      <PanelTab $on>符号库</PanelTab>
      <PanelTab>文件恢复</PanelTab>
    </PanelTabs>
  </Library>
);

const Flow = () => (
  <Diagram>
    {["Customer", "Sales", "Technical Support", "Tester", "Development"].map((t) => (
      <Lane key={t}><LaneName><Upward>{t}</Upward></LaneName></Lane>
    ))}
    <Connectors width="674" height="418" fill="none" stroke="#6da34d">
      <defs>
        <marker id="tip" viewBox="0 0 6 6" refX="5" refY="3" markerWidth="5" markerHeight="5" orient="auto">
          <path d="M0 0.500L6 3L0 5.500z" fill="#5f9843" stroke="none" />
        </marker>
      </defs>
      {plainLines.map((d) => <path key={d} d={d} />)}
      {arrows.map((d) => <path key={d} d={d} markerEnd="url(#tip)" />)}
    </Connectors>
    {nodes.map((n, i) => (
      <Node key={i} $x={n.x} $y={n.y} $w={n.w} $h={n.h} $fill={n.f} $round={n.round} $clip={n.clip}>{n.t}</Node>
    ))}
    {tags.map(([t, x, y]) => <Tag key={x + "-" + y} $x={x} $y={y}>{t}</Tag>)}
  </Diagram>
);

const EditorPane = () => (
  <Editor>
    <DocTabs>
      <DocTab>
        <Icon n="chart" s={12} />
        Software Service C...
        <Tool $w={8} aria-label="Close document"><Icon n="close" s={8} /></Tool>
      </DocTab>
    </DocTabs>
    <Surface>
      <Corner $area="corner" />
      <RulerH>{Array.from({ length: 32 }, (_, i) => <span key={i}>{(i - 1) * 10}</span>)}</RulerH>
      <RulerV>{Array.from({ length: 21 }, (_, i) => <span key={i}><Upward>{i * 10}</Upward></span>)}</RulerV>
      <CanvasArea>
        <Sheet>
          <Banner>Software Service Cross-Functional Process</Banner>
          <Flow />
        </Sheet>
      </CanvasArea>
      <SideScroll><Scroll vertical parts={[91, 305, 97]} label="Vertical scroll" /></SideScroll>
      <BottomScroll><Scroll parts={[178, 393, 182]} label="Horizontal scroll" /></BottomScroll>
      <Corner $area="end" />
    </Surface>
    <PageBar>
      <Tool $w={12} aria-label="Page list"><Icon n="chevron" s={11} /></Tool>
      <PagePick>Page-1<Caret $c="#777777" /></PagePick>
      <PageRule />
      <Tool $w={16} aria-label="Add page"><Icon n="plus" s={10} /></Tool>
      <PageTab>Page-1</PageTab>
    </PageBar>
    <Palette>
      填充
      <Colors>{colors.map((c) => <Color key={c} $c={"#" + c} aria-label={"Color " + c} />)}</Colors>
    </Palette>
  </Editor>
);

const Status = () => (
  <StatusBar>
    <a href="http://www.edrawsoft.cn/">http://www.edrawsoft.cn/</a>
    <span>页1/1</span>
    <StatusTools>
      <StatusButton $on aria-label="Page view"><Icon n="page" s={11} /></StatusButton>
      <StatusButton aria-label="Split view"><Icon n="split" s={10} /></StatusButton>
      <StatusButton aria-label="Present"><Icon n="present" s={10} /></StatusButton>
      <StatusButton aria-label="Zoom out">−</StatusButton>
      <ZoomRange type="range" min="0" max="100" defaultValue="18" aria-label="Zoom" />
      <StatusButton aria-label="Zoom in">+</StatusButton>
      <Percent>81%</Percent>
      <Caret $c="#7f93c0" />
      <StatusButton $w={18} aria-label="Select"><Icon n="select" s={10} /></StatusButton>
      <StatusButton aria-label="Fit"><Icon n="fit" s={10} /></StatusButton>
      <StatusButton aria-label="Zoom area"><Icon n="zoomArea" s={11} /></StatusButton>
      <StatusButton $on aria-label="Grid"><Icon n="grid" s={11} /></StatusButton>
    </StatusTools>
    <Grip><Icon n="grip" s={9} /></Grip>
  </StatusBar>
);

export default function App() {
  return (
    <>
      <Global />
      <Window>
        <TopBar />
        <Menu />
        <RibbonBar />
        <Main>
          <LibraryPanel />
          <EditorPane />
          <SideBar>
            {sideTools.map(([n, label]) => (
              <SideButton key={n} aria-label={label}><Icon n={n} s={16} /></SideButton>
            ))}
          </SideBar>
        </Main>
        <Status />
      </Window>
    </>
  );
}
